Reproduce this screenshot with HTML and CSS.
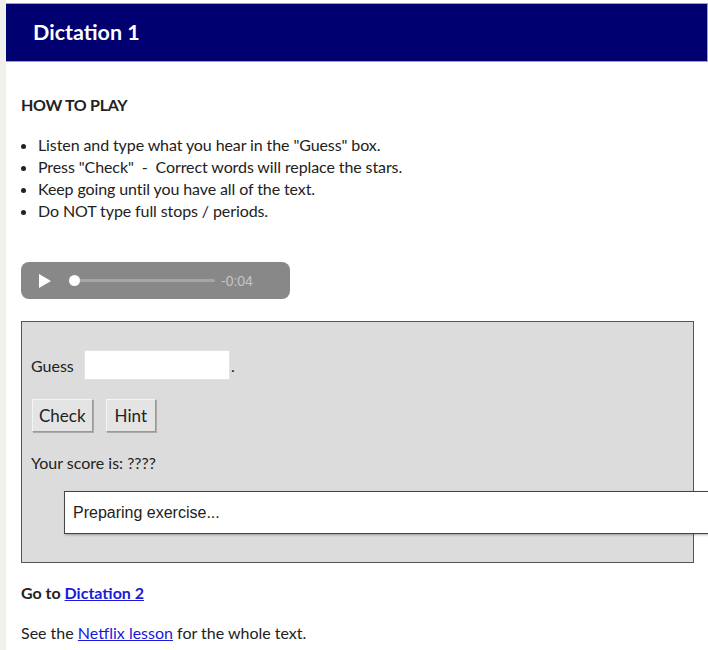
FILE: index.html
```html
<!DOCTYPE html>
<html lang="en">
<head>
    <meta charset="UTF-8">
    <meta name="viewport" content="width=device-width, initial-scale=1.0">
    <title>Dictation 1</title>
    <link rel="stylesheet" href="styles.css">
</head>
<body>
    <div class="page">
        <!-- Title bar -->
        <div class="header">Dictation 1</div>

        <div class="content">
            <h2 class="how-to">HOW TO PLAY</h2>
            <ul class="rules">
                <li>Listen and type what you hear in the "Guess" box.</li>
                <li>Press "Check" &nbsp;- &nbsp;Correct words will replace the stars.</li>
                <li>Keep going until you have all of the text.</li>
                <li>Do NOT type full stops / periods.</li>
            </ul>

            <!-- Audio player -->
            <div class="player">
                <svg class="play" width="14" height="16" viewBox="0 0 14 16"><path d="M1 1 L13 8 L1 15 Z" fill="#fff"/></svg>
                <div class="track"><span class="knob"></span></div>
                <span class="time">-0:04</span>
            </div>

            <!-- Exercise box -->
            <div class="exercise">
                <div class="guess-row">
                    <label for="guess">Guess</label>
                    <input type="text" id="guess"><span class="dot">.</span>
                </div>
                <div class="buttons">
                    <button>Check</button>
                    <button>Hint</button>
                </div>
                <p class="score">Your score is: ????</p>
                <div class="output">Preparing exercise...</div>
            </div>

            <p class="next"><b>Go to <a href="#">Dictation 2</a></b></p>
            <p class="more">See the <a href="#">Netflix lesson</a> for the whole text.</p>
        </div>
    </div>
</body>
</html>
```

FILE: styles.css
```css
/* General */
body {
    margin: 0;
    padding: 0;
    background-color: #f0f0ec;
    font-family: Lato, 'Open Sans', sans-serif;
    color: #222;
    overflow: hidden;
}

.page {
    margin-left: 6px;
    background-color: #fff;
    min-height: 650px;
    padding-top: 3px;
}

/* Header */
.header {
    background-color: #000070;
    border-top: 1px solid #9aa0cc;
    border-bottom: 1px solid #9aa0cc;
    border-right: 1px solid #9aa0cc;
    height: 57px;
    line-height: 57px;
    color: #fff;
    font-size: 21.5px;
    font-weight: bold;
    padding-left: 27px;
}

.content {
    padding-left: 15px;
}

.how-to {
    font-size: 16px;
    font-weight: bold;
    letter-spacing: -0.3px;
    margin: 0;
    padding-top: 33px;
    line-height: 20px;
}

.rules {
    margin: 19px 0 0 0;
    padding-left: 17px;
    font-size: 16px;
    letter-spacing: -0.1px;
    line-height: 22px;
}

/* Audio player */
.player {
    margin-top: 40px;
    width: 269px;
    height: 37px;
    border-radius: 8px;
    background-color: #888;
    display: flex;
    align-items: center;
}

.play {
    margin-left: 17px;
}

.track {
    position: relative;
    margin-left: 20px;
    width: 143px;
    height: 3px;
    background-color: #a6a6a6;
    border-radius: 2px;
}

.knob {
    position: absolute;
    left: -3px;
    top: -4px;
    width: 11px;
    height: 11px;
    border-radius: 50%;
    background-color: #fff;
}

.time {
    margin-left: 6px;
    color: #c4c4c4;
    font-family: 'Liberation Sans', Arial, sans-serif;
    font-size: 14px;
}

/* Exercise box */
.exercise {
    margin-top: 22px;
    width: 673px;
    height: 242px;
    background-color: #dcdcdc;
    border: 1px solid #555;
    padding-left: 9px;
    box-sizing: border-box;
    font-size: 16px;
}

.guess-row {
    margin-top: 28px;
    display: flex;
    align-items: center;
}

.guess-row label {
    width: 53px;
}

.guess-row input {
    width: 146px;
    height: 30px;
    box-sizing: border-box;
    border: 1px solid #e2e2e2;
    background-color: #fff;
    margin: 0;
}

.dot {
    margin-left: 1px;
}

.buttons {
    margin-top: 19px;
    display: flex;
    gap: 13px;
}

.buttons button {
    height: 33px;
    padding: 0 6px;
    font-family: Lato, sans-serif;
    font-size: 17px;
    color: #222;
    background-color: #e4e4e4;
    border: 1px solid #999;
    border-top-color: #f4f4f4;
    border-left-color: #f4f4f4;
    box-shadow: 1px 1px 0 #aaa;
}

.buttons button:first-child {
    margin-left: 1px;
}

.buttons button:last-child {
    padding: 0 8px;
}

.score {
    margin: 21px 0 0 0;
    line-height: 20px;
}

.output {
    margin: 18px 0 0 33px;
    width: 660px;
    height: 43px;
    box-sizing: border-box;
    background-color: #fff;
    border: 1px solid #444;
    box-shadow: 1px 1px 2px rgba(0, 0, 0, 0.3);
    padding-left: 8px;
    line-height: 41px;
    font-family: 'Liberation Sans', Arial, sans-serif;
    font-size: 16px;
    color: #222;
}

/* Links */
a {
    color: #1a1ad8;
}

.next {
    margin: 20px 0 0 0;
    font-size: 16px;
    line-height: 20px;
}

.more {
    margin: 20px 0 0 0;
    font-size: 16px;
    line-height: 20px;
}
```
